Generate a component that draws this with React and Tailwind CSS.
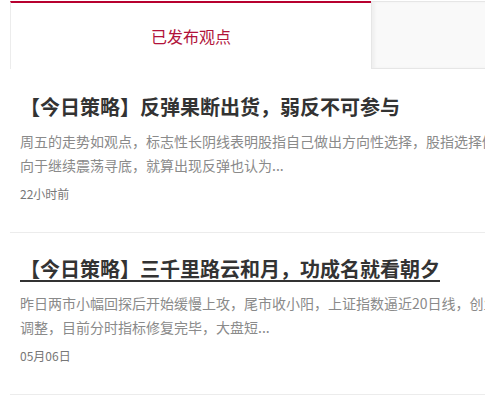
export default function App() {
  const articles = [
    {
      title: "【今日策略】反弹果断出货，弱反不可参与",
      lines: [
        "周五的走势如观点，标志性长阴线表明股指自己做出方向性选择，股指选择倾",
        "向于继续震荡寻底，就算出现反弹也认为...",
      ],
      date: "22小时前",
      hover: false,
    },
    {
      title: "【今日策略】三千里路云和月，功成名就看朝夕",
      lines: [
        "昨日两市小幅回探后开始缓慢上攻，尾市收小阳，上证指数逼近20日线，创业板",
        "调整，目前分时指标修复完毕，大盘短...",
      ],
      date: "05月06日",
      hover: true,
    },
  ];
  return (
    <div className="w-[485px] h-[406px] overflow-hidden bg-white font-['Noto_Sans_CJK_SC','Microsoft_YaHei',sans-serif]">
      <div className="ml-[10px] w-[722px]">
        <div className="flex h-[68px] mt-[1px]">
          <div className="w-[361px] border-t-2 border-t-[#b7002f] border-l border-l-[#ececec] flex items-center justify-center text-[16px] leading-[20px] text-[#b1123a]">
            已发布观点
          </div>
          <div className="flex-1 bg-[#f9f9f9] border border-[#e6e6e6] shadow-[inset_3px_0_3px_rgba(0,0,0,0.04)]"></div>
        </div>
        <div className="mt-[2px]">
          {articles.map((a, i) => (
            <div key={i} className="border-b border-[#ececec] pt-[22px] pb-[29px] px-[10px]">
              <div
                className={
                  "text-[20px] leading-[28px] font-bold text-[#333333] whitespace-nowrap " +
                  (a.hover ? "underline decoration-2 underline-offset-[3px]" : "")
                }
              >
                {a.title}
              </div>
              <div className="mt-[8px] text-[14px] leading-[24px] text-[#8a8a8a]">
                {a.lines.map((l, j) => (
                  <div key={j} className="whitespace-nowrap">
                    {l}
                  </div>
                ))}
              </div>
              <div className="mt-[8px] text-[12px] leading-[18px] text-[#777777]">{a.date}</div>
            </div>
          ))}
        </div>
      </div>
    </div>
  );
}
